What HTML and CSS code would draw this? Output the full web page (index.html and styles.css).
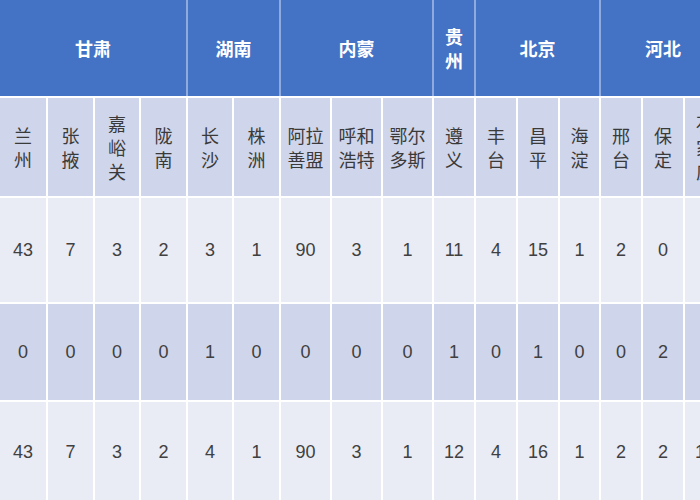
FILE: index.html
```html
<!DOCTYPE html>
<html lang="zh">
<head>
<meta charset="utf-8">
<title>地区统计表</title>
<link rel="stylesheet" href="styles.css">
</head>
<body>
<div class="sheet">
  <div class="cell head span4">甘肃</div>
  <div class="cell head span2">湖南</div>
  <div class="cell head span3">内蒙</div>
  <div class="cell head">贵<br>州</div>
  <div class="cell head span3">北京</div>
  <div class="cell head span3">河北</div>

  <div class="cell sub">兰<br>州</div>
  <div class="cell sub">张<br>掖</div>
  <div class="cell sub">嘉<br>峪<br>关</div>
  <div class="cell sub">陇<br>南</div>
  <div class="cell sub">长<br>沙</div>
  <div class="cell sub">株<br>洲</div>
  <div class="cell sub">阿拉<br>善盟</div>
  <div class="cell sub">呼和<br>浩特</div>
  <div class="cell sub">鄂尔<br>多斯</div>
  <div class="cell sub">遵<br>义</div>
  <div class="cell sub">丰<br>台</div>
  <div class="cell sub">昌<br>平</div>
  <div class="cell sub">海<br>淀</div>
  <div class="cell sub">邢<br>台</div>
  <div class="cell sub">保<br>定</div>
  <div class="cell sub">石<br>家<br>庄</div>

  <div class="cell num light">43</div><div class="cell num light">7</div><div class="cell num light">3</div><div class="cell num light">2</div><div class="cell num light">3</div><div class="cell num light">1</div><div class="cell num light">90</div><div class="cell num light">3</div><div class="cell num light">1</div><div class="cell num light">11</div><div class="cell num light">4</div><div class="cell num light">15</div><div class="cell num light">1</div><div class="cell num light">2</div><div class="cell num light">0</div><div class="cell num light">9</div>

  <div class="cell num dark">0</div><div class="cell num dark">0</div><div class="cell num dark">0</div><div class="cell num dark">0</div><div class="cell num dark">1</div><div class="cell num dark">0</div><div class="cell num dark">0</div><div class="cell num dark">0</div><div class="cell num dark">0</div><div class="cell num dark">1</div><div class="cell num dark">0</div><div class="cell num dark">1</div><div class="cell num dark">0</div><div class="cell num dark">0</div><div class="cell num dark">2</div><div class="cell num dark">1</div>

  <div class="cell num light">43</div><div class="cell num light">7</div><div class="cell num light">3</div><div class="cell num light">2</div><div class="cell num light">4</div><div class="cell num light">1</div><div class="cell num light">90</div><div class="cell num light">3</div><div class="cell num light">1</div><div class="cell num light">12</div><div class="cell num light">4</div><div class="cell num light">16</div><div class="cell num light">1</div><div class="cell num light">2</div><div class="cell num light">2</div><div class="cell num light">10</div>
</div>
</body>
</html>
```

FILE: styles.css
```css
html, body {
  margin: 0;
  padding: 0;
  overflow: hidden;
  background: #ffffff;
}

.sheet {
  display: grid;
  width: 725px;
  grid-template-columns: 46px 45px 44px 45px 44px 45px 49px 49px 49px 40px 40px 40px 39px 40px 40px 40px;
  grid-template-rows: 96px 98px 104px 96px 100px;
  column-gap: 2px;
  row-gap: 2px;
  background: #ffffff;
}

.cell {
  display: flex;
  align-items: center;
  justify-content: center;
  text-align: center;
}

.head {
  background: #4472c4;
  color: #ffffff;
  font-family: "Noto Sans CJK SC", "Noto Sans", sans-serif;
  font-weight: bold;
  font-size: 18px;
  line-height: 24px;
  box-shadow: 0 1px 0 #ffffff, -1px 0 0 #8faadc, 1px 0 0 #8faadc;
}

.span2 { grid-column: span 2; }
.span3 { grid-column: span 3; }
.span4 { grid-column: span 4; }

.sub {
  background: #cfd5ea;
  color: #3a3a3a;
  font-family: "Noto Sans CJK SC", "Noto Sans", sans-serif;
  font-size: 18px;
  line-height: 24px;
}

.num {
  color: #404040;
  font-family: "Liberation Sans", Arial, sans-serif;
  font-size: 18px;
}

.light { background: #e9ebf5; }
.dark { background: #cfd5ea; }
```
